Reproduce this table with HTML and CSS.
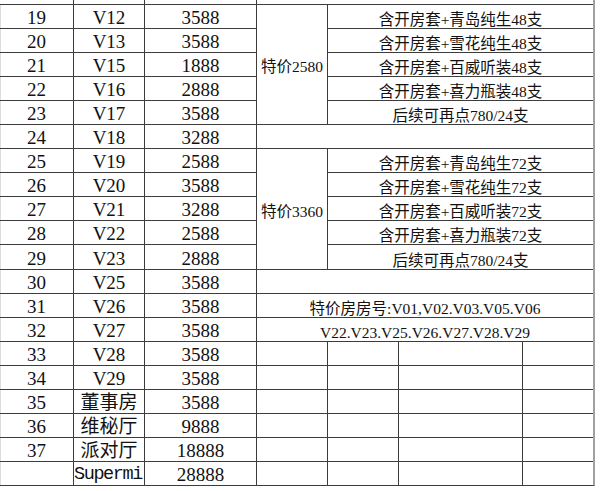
FILE: index.html
```html
<!DOCTYPE html>
<html lang="zh">
<head>
<meta charset="utf-8">
<title>房价表</title>
<link rel="stylesheet" href="styles.css">
</head>
<body>
<div class="sheet">
  <div class="grid">
    <div class="c top"></div><div class="c top"></div><div class="c top"></div><div class="c top dg"></div>

    <div class="c a">19</div><div class="c b">V12</div><div class="c n">3588</div>
    <div class="c d tall t">特价2580</div>
    <div class="c efg t">含开房套+青岛纯生48支</div>
    <div class="c a">20</div><div class="c b">V13</div><div class="c n">3588</div>
    <div class="c efg t">含开房套+雪花纯生48支</div>
    <div class="c a">21</div><div class="c b">V15</div><div class="c n">1888</div>
    <div class="c efg t">含开房套+百威听装48支</div>
    <div class="c a">22</div><div class="c b">V16</div><div class="c n">2888</div>
    <div class="c efg t">含开房套+喜力瓶装48支</div>
    <div class="c a">23</div><div class="c b">V17</div><div class="c n">3588</div>
    <div class="c efg t">后续可再点780/24支</div>

    <div class="c a">24</div><div class="c b">V18</div><div class="c n">3288</div>
    <div class="c dg t"></div>

    <div class="c a">25</div><div class="c b">V19</div><div class="c n">2588</div>
    <div class="c d tall t">特价3360</div>
    <div class="c efg t">含开房套+青岛纯生72支</div>
    <div class="c a">26</div><div class="c b">V20</div><div class="c n">3588</div>
    <div class="c efg t">含开房套+雪花纯生72支</div>
    <div class="c a">27</div><div class="c b">V21</div><div class="c n">3288</div>
    <div class="c efg t">含开房套+百威听装72支</div>
    <div class="c a">28</div><div class="c b">V22</div><div class="c n">2588</div>
    <div class="c efg t">含开房套+喜力瓶装72支</div>
    <div class="c a">29</div><div class="c b">V23</div><div class="c n">2888</div>
    <div class="c efg t">后续可再点780/24支</div>

    <div class="c a">30</div><div class="c b">V25</div><div class="c n">3588</div>
    <div class="c dg t"></div>
    <div class="c a">31</div><div class="c b">V26</div><div class="c n">3588</div>
    <div class="c dg t">特价房房号:V01,V02.V03.V05.V06</div>
    <div class="c a">32</div><div class="c b">V27</div><div class="c n">3588</div>
    <div class="c dg t">V22.V23.V25.V26.V27.V28.V29</div>

    <div class="c a">33</div><div class="c b">V28</div><div class="c n">3588</div>
    <div class="c d"></div><div class="c e"></div><div class="c f"></div><div class="c g"></div>
    <div class="c a">34</div><div class="c b">V29</div><div class="c n">3588</div>
    <div class="c d"></div><div class="c e"></div><div class="c f"></div><div class="c g"></div>
    <div class="c a">35</div><div class="c b">董事房</div><div class="c n">3588</div>
    <div class="c d"></div><div class="c e"></div><div class="c f"></div><div class="c g"></div>
    <div class="c a">36</div><div class="c b">维秘厅</div><div class="c n">9888</div>
    <div class="c d"></div><div class="c e"></div><div class="c f"></div><div class="c g"></div>
    <div class="c a">37</div><div class="c b">派对厅</div><div class="c n">18888</div>
    <div class="c d"></div><div class="c e"></div><div class="c f"></div><div class="c g"></div>
    <div class="c a"></div><div class="c b mono">Supermi</div><div class="c n">28888</div>
    <div class="c d"></div><div class="c e"></div><div class="c f"></div><div class="c g"></div>
  </div>
</div>
</body>
</html>
```

FILE: styles.css
```css
html, body {
  margin: 0;
  padding: 0;
  background: #ffffff;
}

body {
  width: 600px;
  height: 491px;
  overflow: hidden;
}

.sheet {
  display: flex;
  align-items: flex-start;
}

.grid {
  display: grid;
  grid-template-columns: 73px 70px 111px 70px 70px 123px 70px;
  grid-template-rows: 4px repeat(10, 23px) 24px repeat(9, 23px);
  gap: 1px;
  background: #3c3c3c;
  border-bottom: 1px solid #3c3c3c;
  border-right: 2px solid #a0a0a0;
}

.c {
  background: #ffffff;
  display: flex;
  align-items: flex-end;
  justify-content: center;
  overflow: hidden;
  white-space: nowrap;
  font-family: "Liberation Serif", "Noto Sans CJK SC", serif;
  font-size: 19px;
  line-height: 20px;
  color: #111111;
}

.a { grid-column: 1; box-shadow: inset 1px 0 0 #dcdcdc; }
.b { grid-column: 2; }
.n { grid-column: 3; }
.d { grid-column: 4; }
.e { grid-column: 5; }
.f { grid-column: 6; }
.g { grid-column: 7; }
.efg { grid-column: 5 / 8; }
.dg { grid-column: 4 / 8; }

.t {
  font-size: 15.5px;
  line-height: 17px;
}

.tall {
  grid-row: span 5;
  align-items: center;
  padding-top: 4px;
}

.mono {
  justify-content: flex-start;
  font-family: "Liberation Mono", monospace;
  font-size: 18.5px;
  letter-spacing: -1.4px;
}
```
